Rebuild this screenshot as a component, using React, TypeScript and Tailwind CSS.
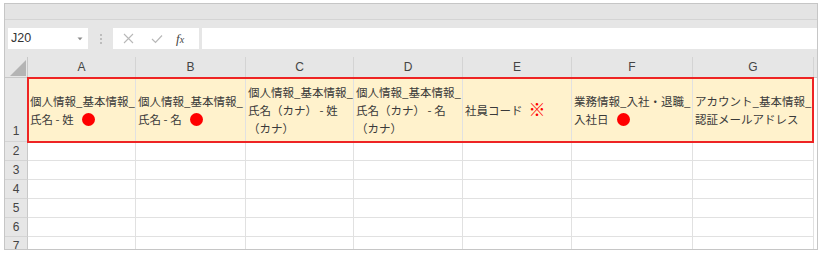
import React from "react";

const cols = [
  { l: "A", w: "w-[108px]" },
  { l: "B", w: "w-[110px]" },
  { l: "C", w: "w-[108px]" },
  { l: "D", w: "w-[109px]" },
  { l: "E", w: "w-[109px]" },
  { l: "F", w: "w-[121px]" },
  { l: "G", w: "w-[121px]" },
];

const Dot = () => (
  <span className="inline-block w-[13px] h-[13px] rounded-full bg-[#ff0000] align-[-2px] ml-[8px]" />
);

const cellTexts: React.ReactNode[] = [
  <>個人情報_基本情報_<br />氏名 - 姓<Dot /></>,
  <>個人情報_基本情報_<br />氏名 - 名<Dot /></>,
  <>個人情報_基本情報_<br />氏名（カナ） - 姓<br />（カナ）</>,
  <>個人情報_基本情報_<br />氏名（カナ） - 名<br />（カナ）</>,
  <>社員コード<span className="text-[#ff0000] text-[17px] ml-[6px] font-bold align-[-1px]">※</span></>,
  <>業務情報_入社・退職_<br />入社日<Dot /></>,
  <>アカウント_基本情報_<br />認証メールアドレス</>,
];

export default function App() {
  const rows = [2, 3, 4, 5, 6, 7];
  return (
    <div className="w-[821px] h-[254px] bg-white pt-[3px] pl-[4px]">
      <div className="w-[814px] h-[247px] border border-[#c6c6c6] bg-[#e6e6e6] flex flex-col overflow-hidden">
        <div className="h-[16px] shrink-0 bg-[#e4e4e4] border-b border-[#d4d4d4]" />
        <div className="h-[8px] shrink-0" />
        <div className="h-[21px] shrink-0 flex pl-[3px]">
          <div className="w-[80px] bg-white flex items-center justify-between pl-[3px] pr-[5px] text-[12.5px] text-[#333] font-['Liberation_Sans',sans-serif]">
            <span>J20</span>
            <svg width="6" height="4" viewBox="0 0 6 4">
              <path d="M0.5 0.5 L3 3.2 L5.5 0.5 Z" fill="#8a8a8a" />
            </svg>
          </div>
          <div className="w-[25px] flex items-center justify-center">
            <div className="flex flex-col gap-[2px]">
              <span className="w-[2px] h-[2px] bg-[#bdbdbd]" />
              <span className="w-[2px] h-[2px] bg-[#bdbdbd]" />
              <span className="w-[2px] h-[2px] bg-[#bdbdbd]" />
            </div>
          </div>
          <div className="w-[86px] bg-white flex items-center">
            <svg className="ml-[10px]" width="11" height="11" viewBox="0 0 11 11">
              <path d="M1 1 L10 10 M10 1 L1 10" stroke="#b8b8b8" strokeWidth="1.1" />
            </svg>
            <svg className="ml-[17px]" width="12" height="10" viewBox="0 0 12 10">
              <path d="M1 5 L4.5 8.5 L11 1.5" stroke="#b8b8b8" strokeWidth="1.2" fill="none" />
            </svg>
            <span className="ml-[13px] text-[13px] italic text-[#444] font-['Liberation_Serif',serif] leading-none">
              f<span className="text-[10px]">x</span>
            </span>
          </div>
          <div className="w-[3px]" />
          <div className="flex-1 bg-white" />
        </div>
        <div className="h-[8px] shrink-0" />
        <div className="flex-1 bg-white flex flex-col font-['Liberation_Sans',sans-serif]">
          {/* column headers */}
          <div className="h-[21px] shrink-0 flex bg-[#e6e6e6] border-b border-[#c8c8c8]">
            <div className="w-[23px] border-r border-[#c8c8c8] relative">
              <svg className="absolute left-[5px] top-[3px]" width="16" height="16" viewBox="0 0 16 16">
                <path d="M16 0 L16 16 L0 16 Z" fill="#b4b4b4" />
              </svg>
            </div>
            {cols.map((c) => (
              <div
                key={c.l}
                className={`${c.w} border-r border-[#d4d4d4] flex items-center justify-center text-[12px] text-[#444]`}
              >
                {c.l}
              </div>
            ))}
          </div>
          {/* row 1 */}
          <div className="h-[64px] shrink-0 flex relative">
            <div className="w-[23px] bg-[#e6e6e6] border-r border-[#c8c8c8] border-b border-b-[#d4d4d4] flex items-end justify-center pb-[1px] text-[12px] text-[#444]">
              1
            </div>
            {cols.map((c, i) => (
              <div
                key={c.l}
                className={`${c.w} bg-[#fff2cc] border-r border-b border-[#e1e1e1] flex items-center pl-[2px] text-[11.5px] leading-[18px] text-[#3a3a3a] whitespace-nowrap overflow-visible font-['Noto_Sans_CJK_JP',sans-serif]`}
              >
                <div>{cellTexts[i]}</div>
              </div>
            ))}
            <div className="absolute left-[22px] top-[-1px] w-[787px] h-[66px] border-2 border-[#ee2424] pointer-events-none" />
          </div>
          {rows.map((r) => (
            <div key={r} className="h-[19px] shrink-0 flex">
              <div className="w-[23px] bg-[#e6e6e6] border-r border-[#c8c8c8] border-b border-b-[#d4d4d4] flex items-center justify-center text-[12px] text-[#444]">
                {r}
              </div>
              {cols.map((c) => (
                <div key={c.l} className={`${c.w} border-r border-b border-[#e1e1e1]`} />
              ))}
            </div>
          ))}
        </div>
      </div>
    </div>
  );
}
